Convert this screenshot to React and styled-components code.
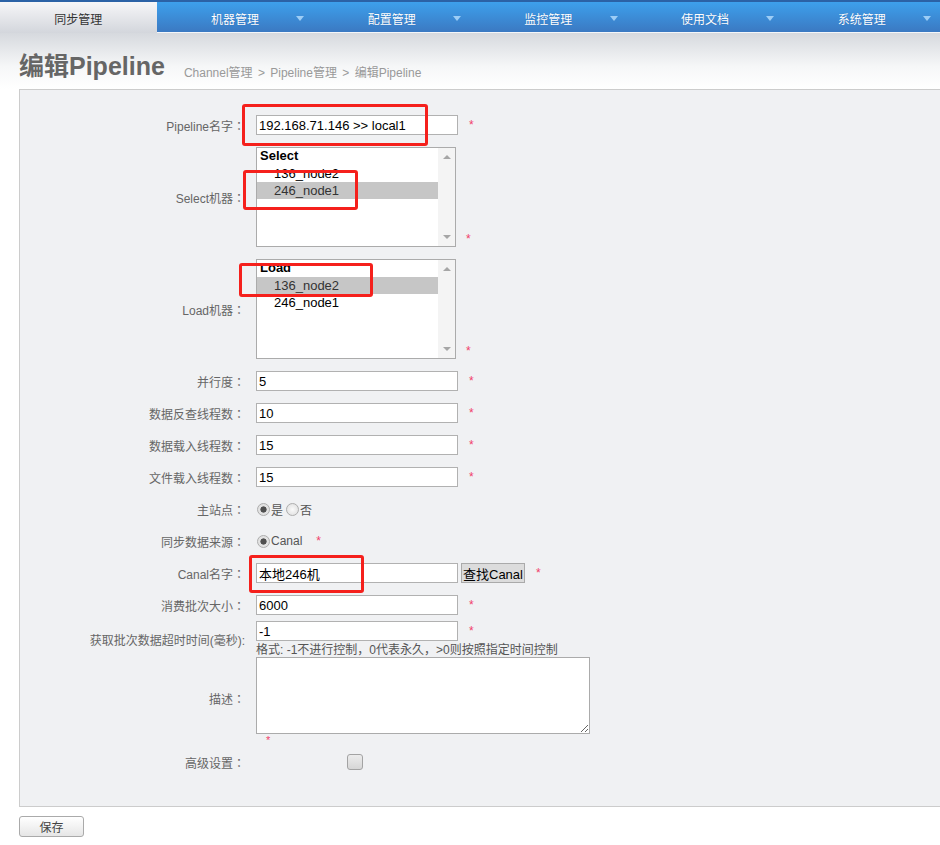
import styled, { createGlobalStyle } from 'styled-components'

const GlobalStyle = createGlobalStyle`
    html, body{
        margin: 0;
        padding: 0;
        background: #fff;
    }
    body{
        font-family: "Liberation Sans", "Noto Sans CJK SC", sans-serif;
        font-size: 12px;
        color: #555;
    }
`

const Page = styled.div`
    position: relative;
    width: 940px;
    height: 845px;
    overflow: hidden;
`

const NavBar = styled.ul`
    display: flex;
    margin: 0;
    padding: 0;
    list-style: none;
    height: 33px;
    border-top: 2px solid #2b62a6;
    box-sizing: border-box;
    background: linear-gradient(#3da0ec, #3b79c2);
    border-bottom: 1px solid #f4f6f9;
`

const NavTab = styled.li`
    position: relative;
    flex: 1;
    display: flex;
    align-items: center;
    justify-content: center;
    padding-top: 2px;
    font-size: 12px;
    color: ${p => p.$active ? '#333' : '#fff'};
    background: ${p => p.$active ? 'linear-gradient(#f6f6f8, #d3d6dc)' : 'transparent'};
    margin-bottom: ${p => p.$active ? '-1px' : '0'};
    text-shadow: ${p => p.$active ? 'none' : '0 0 1px rgba(20,60,120,0.4)'};
`

const TabArrow = styled.span`
    position: absolute;
    right: 9px;
    top: 14px;
    border-left: 4px solid transparent;
    border-right: 4px solid transparent;
    border-top: 5px solid #9dcdf6;
`

const Header = styled.div`
    display: flex;
    align-items: flex-end;
    gap: 19px;
    height: 56px;
    padding: 0 0 0 19px;
    box-sizing: border-box;
    background: linear-gradient(#d6d9de, #f6f7f8 60%, #fff);
`

const Title = styled.h1`
    margin: 0 0 8px 0;
    font-size: 25px;
    font-weight: bold;
    color: #666;
    line-height: 30px;
`

const Crumbs = styled.div`
    margin-bottom: 9px;
    font-size: 12px;
    color: #999;
    word-spacing: 2px;
`

const Panel = styled.div`
    margin-left: 19px;
    width: 940px;
    padding: 19px 0 28px;
    background: #f0f1f3;
    border: 1px solid #ccc;
`

const Row = styled.div`
    display: grid;
    grid-template-columns: 225px 1fr;
    column-gap: 11px;
    align-items: center;
    padding: ${p => p.$flush ? '0' : '6px'} 0 ${p => p.$flushBottom ? '0' : '6px'};
`

const Label = styled.div`
    text-align: right;
    font-size: 12px;
    color: #666;
`

const Colon = styled.span`
    font-family: "Noto Sans CJK TC", sans-serif;
`

const Field = styled.div`
    display: flex;
    min-height: 20px;
    align-items: ${p => p.$bottom ? 'flex-end' : 'center'};
`

const FieldColumn = styled.div`
    display: flex;
    flex-direction: column;
    align-items: flex-start;
`

const TextInput = styled.input`
    width: 202px;
    height: 20px;
    box-sizing: border-box;
    margin: 0;
    padding: 0 2px;
    border: 1px solid #b1b1b1;
    background: #fff;
    font-family: "Liberation Sans", "Noto Sans CJK SC", sans-serif;
    font-size: 13px;
    color: #000;
    outline: none;
`

const Star = styled.span`
    margin-left: ${p => p.$gap || 11}px;
    color: #f0406a;
    font-size: 12px;
    line-height: 12px;
    align-self: ${p => p.$low ? 'flex-end' : 'center'};
    margin-bottom: ${p => p.$low ? '2px' : '0'};
`

const ListBox = styled.div`
    display: flex;
    width: 200px;
    height: 100px;
    box-sizing: border-box;
    border: 1px solid #ababab;
    background: #fff;
`

const ListItems = styled.div`
    flex: 1;
    display: flex;
    flex-direction: column;
    font-size: 13px;
    color: #000;
`

const ListHead = styled.div`
    height: 17px;
    line-height: 16px;
    padding-left: 3px;
    font-weight: bold;
`

const ListOption = styled.div`
    height: 17px;
    line-height: 17px;
    padding-left: 17px;
    background: ${p => p.$selected ? '#c6c6c6' : 'transparent'};
    color: ${p => p.$selected ? '#333' : '#000'};
`

const ScrollTrack = styled.div`
    width: 17px;
    display: flex;
    flex-direction: column;
    justify-content: space-between;
    align-items: center;
    padding: 7px 0;
    background: #f4f4f4;
`

const ScrollArrow = styled.span`
    border-left: 4px solid transparent;
    border-right: 4px solid transparent;
    ${p => p.$down ? 'border-top' : 'border-bottom'}: 4px solid #a6a6a6;
`

const RadioGroup = styled.label`
    display: inline-flex;
    align-items: center;
    font-size: 12px;
    color: #555;
    margin-right: 2px;
`

const Radio = styled.input.attrs({ type: 'radio' })`
    appearance: none;
    width: 13px;
    height: 13px;
    margin: 0 1px 0 1px;
    border-radius: 50%;
    border: 1px solid #adadad;
    box-sizing: border-box;
    background: radial-gradient(circle, #fafafa, #dcdcdc);
    &:checked{
        background: radial-gradient(circle, #4f4f4f 0 2.8px, #e2e2e2 3.4px);
    }
`

const Hint = styled.div`
    margin-top: 2px;
    line-height: 14px;
    font-size: 12px;
    color: #555;
`

const TextArea = styled.textarea`
    width: 334px;
    height: 77px;
    box-sizing: border-box;
    margin: 0;
    border: 1px solid #ababab;
    background: #fff;
    display: block;
`

const StarLine = styled.div`
    height: 6px;
    padding-left: 10px;
    color: #f0406a;
    font-size: 11px;
    line-height: 12px;
`

const CheckBox = styled.span`
    display: block;
    width: 16px;
    height: 16px;
    margin-left: 91px;
    box-sizing: border-box;
    border: 1px solid #a3a3a3;
    border-radius: 3px;
    background: linear-gradient(#ececec, #d6d6d6);
`

const FindButton = styled.button`
    margin-left: 3px;
    height: 20px;
    padding: 0 1px;
    border: 1px solid #aaa;
    background: #dcdcdc;
    font-family: "Liberation Sans", "Noto Sans CJK SC", sans-serif;
    font-size: 13px;
    color: #000;
`

const SaveButton = styled.button`
    display: block;
    margin: 9px 0 0 19px;
    width: 65px;
    height: 21px;
    border: 1px solid #aaa;
    border-radius: 3px;
    background: linear-gradient(#fff, #e6e6e6);
    font-family: "Liberation Sans", "Noto Sans CJK SC", sans-serif;
    font-size: 12px;
    color: #444;
`

const Mark = styled.div`
    position: absolute;
    left: ${p => p.$x}px;
    top: ${p => p.$y}px;
    width: ${p => p.$w}px;
    height: ${p => p.$h}px;
    box-sizing: border-box;
    border: 3px solid #f5201c;
    border-radius: 3px;
    pointer-events: none;
`

const tabs = ['同步管理', '机器管理', '配置管理', '监控管理', '使用文档', '系统管理']

function Listing({ head, items, selected }) {
    return (
        <ListBox>
            <ListItems>
                <ListHead>{head}</ListHead>
                {items.map(it => (
                    <ListOption key={it} $selected={it === selected}>{it}</ListOption>
                ))}
            </ListItems>
            <ScrollTrack>
                <ScrollArrow />
                <ScrollArrow $down />
            </ScrollTrack>
        </ListBox>
    )
}

function FieldLabel({ text, plain }) {
    return (
        <Label>
            {text}
            {plain ? ':' : <Colon>：</Colon>}
        </Label>
    )
}

function InputRow({ label, value }) {
    return (
        <Row>
            <FieldLabel text={label} />
            <Field>
                <TextInput defaultValue={value} />
                <Star>*</Star>
            </Field>
        </Row>
    )
}

export default function App() {
    return (
        <Page>
            <GlobalStyle />
            <NavBar>
                {tabs.map((t, i) => (
                    <NavTab key={t} $active={i === 0}>
                        {t}
                        {i > 0 && <TabArrow />}
                    </NavTab>
                ))}
            </NavBar>
            <Header>
                <Title>编辑Pipeline</Title>
                <Crumbs>Channel管理 &gt; Pipeline管理 &gt; 编辑Pipeline</Crumbs>
            </Header>
            <Panel>
                <InputRow label="Pipeline名字" value="192.168.71.146 >> local1" />
                <Row>
                    <FieldLabel text="Select机器" />
                    <Field $bottom>
                        <Listing head="Select" items={['136_node2', '246_node1']} selected="246_node1" />
                        <Star $low $gap={10}>*</Star>
                    </Field>
                </Row>
                <Row>
                    <FieldLabel text="Load机器" />
                    <Field $bottom>
                        <Listing head="Load" items={['136_node2', '246_node1']} selected="136_node2" />
                        <Star $low $gap={10}>*</Star>
                    </Field>
                </Row>
                <InputRow label="并行度" value="5" />
                <InputRow label="数据反查线程数" value="10" />
                <InputRow label="数据载入线程数" value="15" />
                <InputRow label="文件载入线程数" value="15" />
                <Row>
                    <FieldLabel text="主站点" />
                    <Field>
                        <RadioGroup><Radio name="main" defaultChecked />是</RadioGroup>
                        <RadioGroup><Radio name="main" />否</RadioGroup>
                    </Field>
                </Row>
                <Row>
                    <FieldLabel text="同步数据来源" />
                    <Field>
                        <RadioGroup><Radio name="src" defaultChecked />Canal</RadioGroup>
                        <Star $gap={12}>*</Star>
                    </Field>
                </Row>
                <Row>
                    <FieldLabel text="Canal名字" />
                    <Field>
                        <TextInput defaultValue="本地246机" />
                        <FindButton>查找Canal</FindButton>
                        <Star>*</Star>
                    </Field>
                </Row>
                <InputRow label="消费批次大小" value="6000" />
                <Row $flush $flushBottom>
                    <FieldLabel text="获取批次数据超时时间(毫秒)" plain />
                    <FieldColumn>
                        <Field>
                            <TextInput defaultValue="-1" />
                            <Star>*</Star>
                        </Field>
                        <Hint>格式: -1不进行控制，0代表永久，&gt;0则按照指定时间控制</Hint>
                    </FieldColumn>
                </Row>
                <Row $flush>
                    <FieldLabel text="描述" />
                    <FieldColumn>
                        <TextArea />
                        <StarLine>*</StarLine>
                    </FieldColumn>
                </Row>
                <Row>
                    <FieldLabel text="高级设置" />
                    <Field>
                        <CheckBox />
                    </Field>
                </Row>
            </Panel>
            <SaveButton>保存</SaveButton>

            <Mark $x={242} $y={104} $w={186} $h={42} />
            <Mark $x={243} $y={170} $w={115} $h={40} />
            <Mark $x={239} $y={263} $w={134} $h={34} />
            <Mark $x={249} $y={555} $w={115} $h={38} />
        </Page>
    )
}
